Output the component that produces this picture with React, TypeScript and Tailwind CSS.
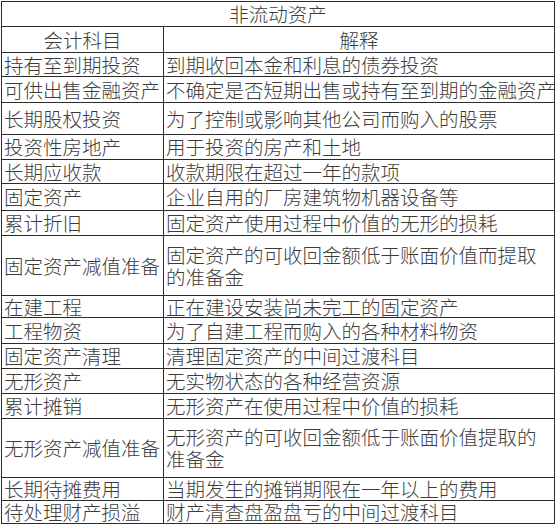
import React from "react";

type Row = { name: string; desc: React.ReactNode; h: string };

const rows: Row[] = [
  { name: "持有至到期投资", desc: "到期收回本金和利息的债券投资", h: "h-[24px]" },
  { name: "可供出售金融资产", desc: "不确定是否短期出售或持有至到期的金融资产", h: "h-[26px]" },
  { name: "长期股权投资", desc: "为了控制或影响其他公司而购入的股票", h: "h-[32px]" },
  { name: "投资性房地产", desc: "用于投资的房产和土地", h: "h-[25px]" },
  { name: "长期应收款", desc: "收款期限在超过一年的款项", h: "h-[24px]" },
  { name: "固定资产", desc: "企业自用的厂房建筑物机器设备等", h: "h-[27px]" },
  { name: "累计折旧", desc: "固定资产使用过程中价值的无形的损耗", h: "h-[25px]" },
  {
    name: "固定资产减值准备",
    desc: (
      <>
        固定资产的可收回金额低于账面价值而提取
        <br />
        的准备金
      </>
    ),
    h: "h-[60px]",
  },
  { name: "在建工程", desc: "正在建设安装尚未完工的固定资产", h: "h-[22px]" },
  { name: "工程物资", desc: "为了自建工程而购入的各种材料物资", h: "h-[26px]" },
  { name: "固定资产清理", desc: "清理固定资产的中间过渡科目", h: "h-[25px]" },
  { name: "无形资产", desc: "无实物状态的各种经营资源", h: "h-[25px]" },
  { name: "累计摊销", desc: "无形资产在使用过程中价值的损耗", h: "h-[25px]" },
  {
    name: "无形资产减值准备",
    desc: (
      <>
        无形资产的可收回金额低于账面价值提取的
        <br />
        准备金
      </>
    ),
    h: "h-[59px]",
  },
  { name: "长期待摊费用", desc: "当期发生的摊销期限在一年以上的费用", h: "h-[23px]" },
  { name: "待处理财产损溢", desc: "财产清查盘盈盘亏的中间过渡科目", h: "h-[23px]" },
];

export default function App() {
  return (
    <div className="w-[556px] h-[524px] bg-white overflow-hidden pt-[1px] pl-[1px]">
      <div className="w-[554px] border-t border-l border-r border-[#2b2b2b] text-[19.5px] leading-[22px] font-light text-[#3c3c3c] font-['Noto_Sans_CJK_SC',sans-serif]">
        <div className="h-[25px] flex items-center justify-center border-b border-[#2b2b2b]">
          非流动资产
        </div>
        <div className="h-[26px] flex border-b border-[#2b2b2b]">
          <div className="w-[162px] shrink-0 flex items-center justify-center border-r border-[#2b2b2b]">
            会计科目
          </div>
          <div className="flex-1 flex items-center justify-center">解释</div>
        </div>
        {rows.map((r) => (
          <div key={r.name} className={`${r.h} flex border-b border-[#2b2b2b]`}>
            <div className="w-[162px] shrink-0 flex items-center pl-[2px] whitespace-nowrap border-r border-[#2b2b2b]">
              {r.name}
            </div>
            <div className="flex-1 min-w-0 flex items-center pl-[2px] whitespace-nowrap">
              <div>{r.desc}</div>
            </div>
          </div>
        ))}
      </div>
    </div>
  );
}
